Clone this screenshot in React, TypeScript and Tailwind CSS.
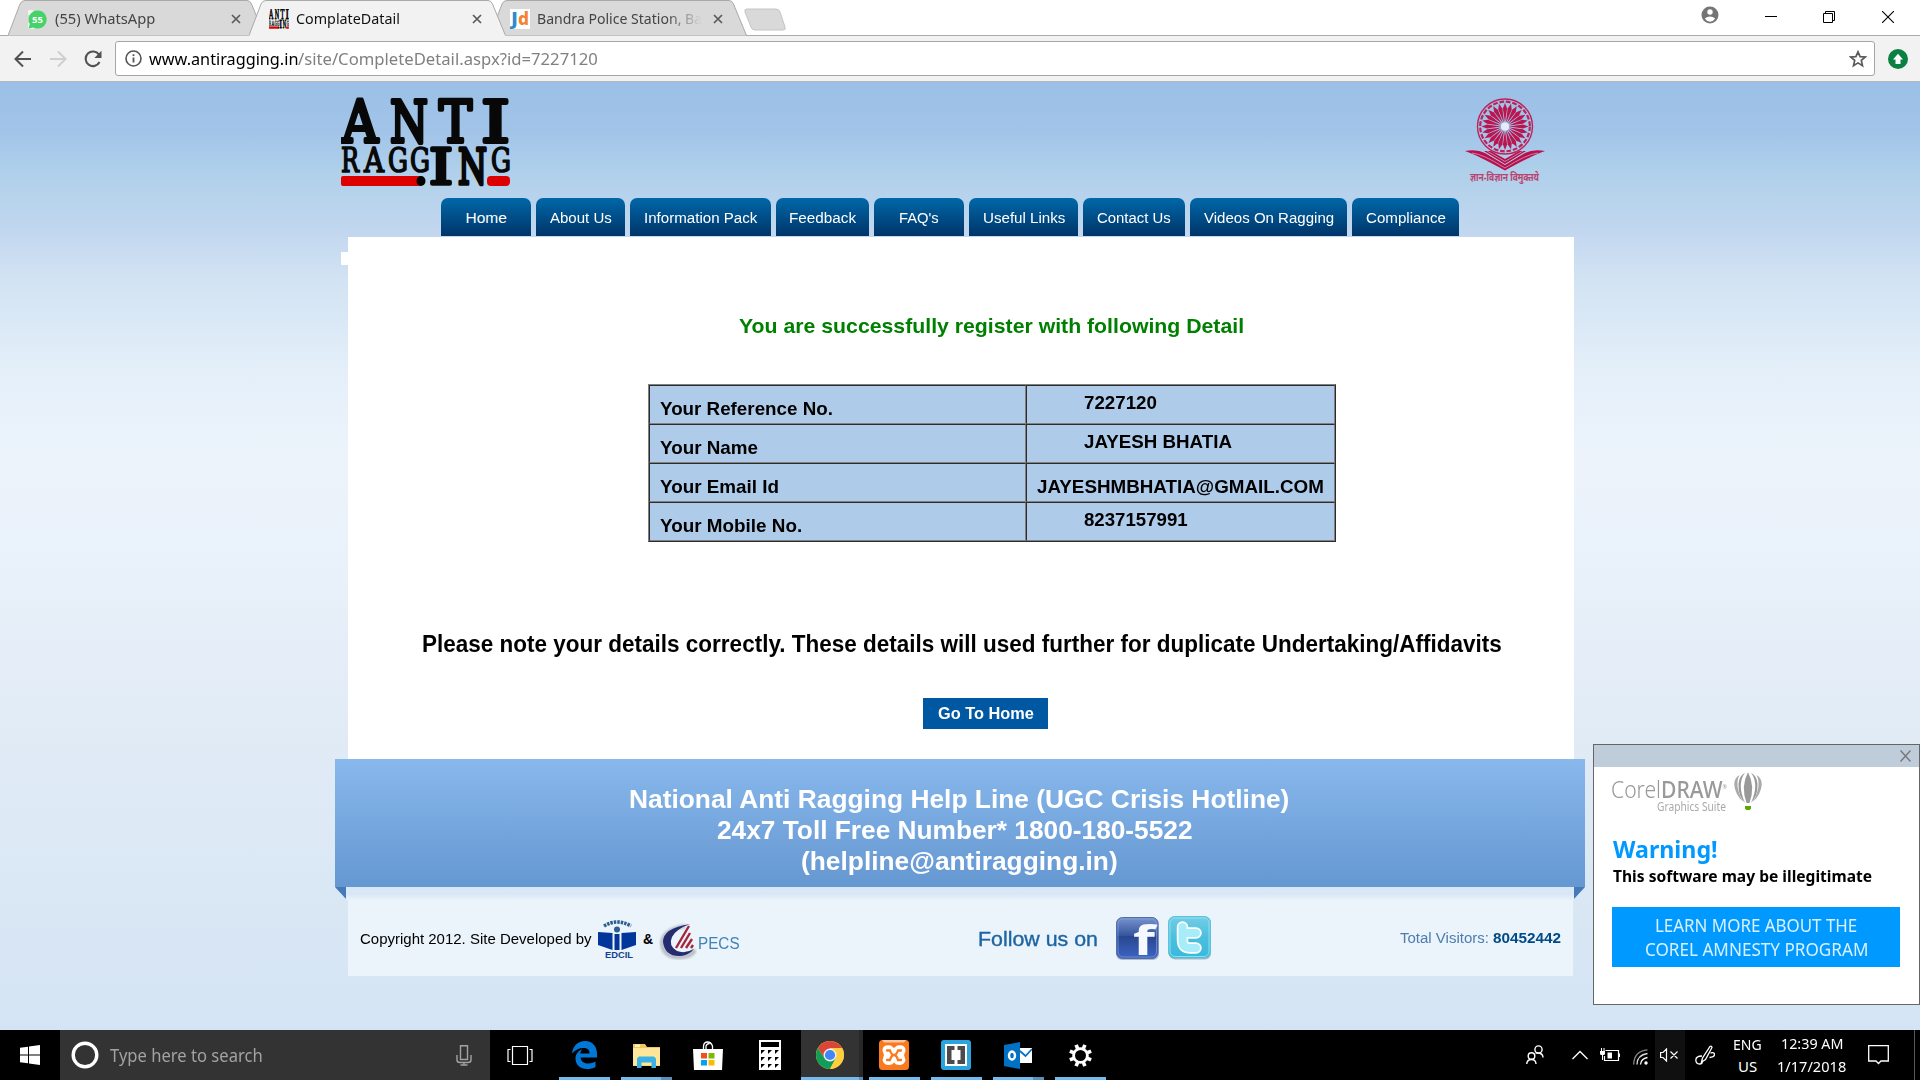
import { useLayoutEffect, useRef, useState, type ReactNode } from "react";

/** One line of text condensed or widened to a given advance width. */
function Fit({ w, className = "", children }: { w: number; className?: string; children: ReactNode }) {
  const ref = useRef<HTMLSpanElement>(null);
  const [scale, setScale] = useState(1);
  useLayoutEffect(() => {
    if (ref.current) setScale(w / ref.current.offsetWidth);
  }, [w]);
  return (
    <span className={"block shrink-0 whitespace-nowrap " + className} style={{ width: w }}>
      <span ref={ref} className="inline-block origin-left align-top" style={{ transform: `scaleX(${scale})` }}>
        {children}
      </span>
    </span>
  );
}

function Tab({ icon, title, w, active, fade }: { icon: ReactNode; title: string; w: number; active?: boolean; fade?: boolean }) {
  return (
    <div className={"relative -ml-4 flex h-9 w-[257px] shrink-0 items-center " + (active ? "z-10" : "z-0")}>
      <svg className="absolute inset-0" width="257" height="36" viewBox="0 0 257 36">
        <path
          d="M0 35.5 L12 4 Q13.500 .5 17 .5 H239 Q242 .5 243.500 4 L256.500 35.500"
          fill={active ? "#f2f2f2" : "#d9d9d9"}
          stroke="#a9a9a9"
        />
        {active && <path d="M.5 36 L1 35 H256 L256.500 36Z" fill="#f2f2f2" />}
      </svg>
      <div className="relative ml-5 mt-[2px] flex w-[27px] shrink-0">{icon}</div>
      <div className={"relative w-[166px] overflow-hidden leading-5 " + (fade ? "[mask-image:linear-gradient(to_right,#000_78%,transparent_99%)]" : "")}>
        <Fit w={w} className={"text-[15px] leading-5 " + (active ? "text-[#111]" : "text-[#444]")}>{title}</Fit>
      </div>
      <svg className="relative ml-[10px] mt-[2px]" width="10" height="10" viewBox="0 0 10 10">
        <path d="M1 1 L9 9 M9 1 L1 9" stroke="#5a5a5a" strokeWidth="1.700" />
      </svg>
    </div>
  );
}

/** Slab-lettered wordmark; x and width place each letter. */
function AntiRaggingLogo({ size = "full" }: { size?: "full" | "small" }) {
  const big: [string, number, number][] = [["A", 1, 36], ["N", 49, 38], ["T", 98, 33], ["I", 140, 29]];
  const low: [string, number, number][] = [["R", 0, 18], ["A", 23, 20], ["G", 47, 20], ["G", 69, 20], ["G", 150, 20]];
  const tall: [string, number, number][] = [["I", 88, 24], ["N", 117, 29]];
  const letter = ([c, x, w]: [string, number, number], y: number, fs: number, sw: number) => (
    <text key={c + x} x={x} y={y} fontSize={fs} strokeWidth={sw} textLength={w} lengthAdjust="spacingAndGlyphs">{c}</text>
  );
  return (
    <svg width={size === "full" ? 170 : 20} height={size === "full" ? 90 : 20} viewBox="0 0 170 90" preserveAspectRatio="none">
      <rect x="0" y="79" width="80" height="10" rx="2" fill="#dc0000" />
      <rect x="146" y="79" width="23" height="10" rx="4" fill="#dc0000" />
      <ellipse cx="80" cy="84" rx="4.500" ry="5" />
      <g fontFamily="DejaVu Serif, serif" fill="#080808" stroke="#080808" strokeLinejoin="round">
        {big.map((l) => letter(l, 45, 58, 4))}
        {low.map((l) => letter(l, 74.5, 33, 1.7))}
        {tall.map((l) => letter(l, 87, 48, 3.6))}
      </g>
    </svg>
  );
}

function Emblem() {
  const spokes = Array.from({ length: 24 }, (_, i) => i * 15);
  return (
    <svg width="84" height="92" viewBox="0 0 84 92">
      <g transform="translate(42 29.500)" fill="none" stroke="#bf2058">
        <circle r="27.500" strokeWidth="1.400" />
        <circle r="24.800" strokeWidth="2.200" strokeDasharray="4.700 1.800" />
        {spokes.map((a) => (
          <path key={a} transform={`rotate(${a})`} d="M0 -4 L-2.100 -18 L0 -23.500 L2.100 -18Z" fill="#b9164f" stroke="none" />
        ))}
        <circle r="4" fill="#e4ecf8" stroke="none" />
      </g>
      <g fill="#b90f4b">
        <path d="M2 54 Q14 52 22 56 L42 68 L62 56 Q70 52 82 54 Q70 58 42 73.500 Q14 58 2 54Z" />
        <path d="M21 54 H28 L42 62 L56 54 H63 L42 67Z" />
      </g>
      <path d="M9 56 Q20 57 42 71 Q64 57 75 56 M24 54 L42 64.500 L60 54" fill="none" stroke="#c6d3ea" strokeWidth=".6" />
      <text x="7" y="84" fontFamily="Noto Sans, sans-serif" fontWeight="700" fontSize="11" fill="#b9446f" textLength="69" lengthAdjust="spacingAndGlyphs">
        ज्ञान-विज्ञान विमुक्तये
      </text>
    </svg>
  );
}

const NAV: [string, string, number][] = [
  ["Home", "w-[90px]", 41],
  ["About Us", "w-[89px]", 62],
  ["Information Pack", "w-[141px]", 113],
  ["Feedback", "w-[93px]", 67],
  ["FAQ's", "w-[90px]", 40],
  ["Useful Links", "w-[109px]", 82],
  ["Contact Us", "w-[102px]", 74],
  ["Videos On Ragging", "w-[157px]", 130],
  ["Compliance", "w-[107px]", 80],
];

const ROWS: { label: string; lw: number; value: string; vw: number; wide?: boolean }[] = [
  { label: "Your Reference No.", lw: 173, value: "7227120", vw: 73 },
  { label: "Your Name", lw: 98, value: "JAYESH BHATIA", vw: 148 },
  { label: "Your Email Id", lw: 119, value: "JAYESHMBHATIA@GMAIL.COM", vw: 287, wide: true },
  { label: "Your Mobile No.", lw: 142, value: "8237157991", vw: 104 },
];

function Browser() {
  return (
    <header className="h-[82px] shrink-0 bg-white font-['Noto_Sans',sans-serif]">
      <div className="relative flex h-9 border-b border-[#acacac] pl-6">
        <div className="flex h-9">
          <Tab
            title="(55) WhatsApp"
            w={100}
            icon={
              <svg width="19" height="19" viewBox="0 0 19 19">
                <path d="M0 0H5V5H0Z M0 13H6V19H0Z" fill="#eef6ef" />
                <path d="M9.500 .5a9 9 0 1 1-4 17L.5 18.500 1.800 14A9 9 0 0 1 9.500 .5Z" fill="#43d366" />
                <text x="9.500" y="13" textAnchor="middle" fontSize="9.500" fontWeight="700" fill="#fff">55</text>
              </svg>
            }
          />
          <Tab title="ComplateDatail" w={104} active icon={<AntiRaggingLogo size="small" />} />
          <Tab
            title="Bandra Police Station, Ba"
            w={165}
            fade
            icon={
              <svg width="20" height="20" viewBox="0 0 20 20">
                <rect width="20" height="20" fill="#fff" />
                <text x="1" y="16" fontSize="18" fontWeight="800" fill="#2f8ccb" textLength="7" lengthAdjust="spacingAndGlyphs">J</text>
                <text x="8" y="16" fontSize="18" fontWeight="800" fill="#f58233" textLength="11" lengthAdjust="spacingAndGlyphs">d</text>
              </svg>
            }
          />
        </div>
        <svg className="-ml-[4px] mt-[8px]" width="44" height="23" viewBox="0 0 44 23">
          <path d="M4 1 H33 Q36 1 37 4 L42 19 Q43 22 40 22 H12 Q9 22 8 19 L2 4 Q1 1 4 1Z" fill="#d9d9d9" stroke="#c4c4c4" />
        </svg>
        <div className="ml-auto flex">
          <svg className="mt-[6px] mr-[46px]" width="18" height="18" viewBox="0 0 18 18">
            <circle cx="9" cy="9" r="8.500" fill="#757575" />
            <circle cx="9" cy="6" r="2.700" fill="#fff" />
            <path d="M3.800 12.500 Q9 8.500 14.200 12.500 Q12 15.800 9 15.800 T3.800 12.500Z" fill="#fff" />
          </svg>
          <svg className="mt-[10px] mr-[46px]" width="12" height="13" viewBox="0 0 12 13"><path d="M0 6.500H12" stroke="#000" /></svg>
          <svg className="mt-[11px] mr-[46px]" width="13" height="13" viewBox="0 0 13 13">
            <path d="M.5 2.500H9.500V11.500H.5Z M2.500 2.500V.5H11.500V9.500H9.500" fill="none" stroke="#000" />
          </svg>
          <svg className="mt-[11px] mr-[26px]" width="12" height="12" viewBox="0 0 12 12"><path d="M0 0L12 12M12 0L0 12" stroke="#000" strokeWidth="1.100" /></svg>
        </div>
      </div>
      <div className="flex h-[46px] items-center border-b border-[#b4b8bb] bg-[#f2f2f2] pl-[13px]">
        <svg width="19" height="18" viewBox="0 0 19 18"><path d="M18 9H3M10 1.500L2.500 9L10 16.500" fill="none" stroke="#525252" strokeWidth="2" /></svg>
        <svg className="ml-[17px]" width="19" height="18" viewBox="0 0 19 18"><path d="M1 9H16M9 1.500L16.500 9L9 16.500" fill="none" stroke="#cfcfcf" strokeWidth="2" /></svg>
        <svg className="ml-[16px]" width="19" height="18" viewBox="0 0 19 18">
          <path d="M15.500 12 A7.300 7.300 0 1 1 15 4.700" fill="none" stroke="#525252" strokeWidth="2.100" />
          <path d="M17.500 .8V8H10.300Z" fill="#525252" />
        </svg>
        <div className="ml-3 flex h-[35px] w-[1760px] items-center rounded-[3px] border border-[#a6a6a6] bg-white pl-[9px]">
          <svg width="17" height="17" viewBox="0 0 17 17">
            <circle cx="8.500" cy="8.500" r="7.500" fill="none" stroke="#555" strokeWidth="1.600" />
            <path d="M8.500 7.500V12.500M8.500 4.300V6" stroke="#555" strokeWidth="1.800" />
          </svg>
          <Fit w={149} className="ml-[7px] text-[17px] leading-6 text-black">www.antiragging.in</Fit>
          <Fit w={300} className="text-[17px] leading-6 text-[#808080]">/site/CompleteDetail.aspx?id=7227120</Fit>
          <svg className="ml-auto mr-[7px]" width="18" height="18" viewBox="0 0 18 18">
            <path d="M9 1.800L11.100 6.600L16.300 7L12.300 10.400L13.500 15.700L9 12.900L4.500 15.700L5.700 10.400L1.700 7L6.900 6.600Z" fill="none" stroke="#5a5a5a" strokeWidth="1.700" />
          </svg>
        </div>
        <svg className="ml-[13px]" width="20" height="20" viewBox="0 0 20 20">
          <circle cx="10" cy="10" r="10" fill="#0b8043" />
          <path d="M10 4.800L15 10.500H12.500V15H7.500V10.500H5Z" fill="#fff" />
        </svg>
      </div>
    </header>
  );
}

function Cell({ children, className }: { children: ReactNode; className: string }) {
  return (
    <div className={"h-[39px] border-b border-l border-r border-t border-b-[#808080] border-l-[#2c2c2c] border-r-[#808080] border-t-[#2c2c2c] " + className}>
      {children}
    </div>
  );
}

function Site() {
  return (
    <main className="h-[948px] shrink-0 bg-[linear-gradient(to_bottom,#9bbfe6_0px,#a2c4e9_50px,#aecfea_85px,#c2d7ef_150px,#d2e3f3_198px,#e6f0fa_300px,#ecf3fb_380px,#e9f1fa_480px,#e1ebf6_650px,#dae8f5_800px,#d5e4f4_948px)] pl-[335px] font-['Liberation_Sans',Arial,sans-serif]">
      <div className="flex w-[1250px] flex-col">
        <div className="flex h-[116px] justify-between pl-[6px] pr-[38px] pt-[15px]">
          <AntiRaggingLogo />
          <Emblem />
        </div>
        <nav className="ml-[106px] flex gap-[5px]">
          {NAV.map(([label, width, tw]) => (
            <a key={label} className={"flex h-[38px] items-center justify-center rounded-t-[7px] bg-linear-to-b from-[#0068a8] to-[#00356a] text-[15.500px] text-white " + width}>
              <Fit w={tw} className="mt-[1px] leading-5">{label}</Fit>
            </a>
          ))}
        </nav>
        <section className="relative ml-[13px] mt-px flex h-[522px] w-[1226px] flex-col bg-white">
          <div className="absolute -left-[7px] top-[15px] h-[13px] w-[7px] bg-white" />
          <Fit w={505} className="ml-[391px] mt-[75px] text-[21px] font-bold leading-7 text-[#008000]">
            You are successfully register with following Detail
          </Fit>
          <div className="ml-[300px] mt-[44px] w-[688px] border border-b-[#2c2c2c] border-l-[#808080] border-r-[#2c2c2c] border-t-[#808080] bg-[#aecbe9] text-[19px] font-bold leading-6 text-black">
            {ROWS.map((r) => (
              <div key={r.label} className="flex">
                <Cell className="w-[377px] pl-[10px] pt-[11px]"><Fit w={r.lw}>{r.label}</Fit></Cell>
                <Cell className={"w-[309px] " + (r.wide ? "pl-[10px] pt-[11px]" : "pl-[57px] pt-[5px]")}><Fit w={r.vw}>{r.value}</Fit></Cell>
              </div>
            ))}
          </div>
          <Fit w={1080} className="ml-[74px] mt-[87px] text-[23.500px] font-bold leading-[30px] text-black">
            Please note your details correctly. These details will used further for duplicate Undertaking/Affidavits
          </Fit>
          <button className="ml-[575px] mt-[39px] flex h-[31px] w-[125px] items-center bg-[#0058a3] pl-[14px] text-[16px] font-bold text-white">
            <Fit w={96} className="leading-5">Go To Home</Fit>
          </button>
        </section>
        <section className="flex h-32 flex-col items-center bg-linear-to-b from-[#88b8ec] to-[#6597d1] pt-[25px] text-[26.670px] font-bold leading-[31px] text-white">
          <Fit w={660} className="ml-[-2px]">National Anti Ragging Help Line (UGC Crisis Hotline)</Fit>
          <Fit w={476} className="ml-[-10px]">24x7 Toll Free Number* 1800-180-5522</Fit>
          <Fit w={317} className="ml-[-2px]">{"(helpline@antiragging.in)"}</Fit>
        </section>
        <div className="flex h-[13px]">
          <svg width="11" height="13" viewBox="0 0 11 13"><path d="M0 0H11V12Z" fill="#447ab9" /></svg>
          <div className="w-[1228px] bg-linear-to-b from-[#dae8f6] via-[#d8e7f6] to-[#e9f2fa]" />
          <svg width="11" height="13" viewBox="0 0 11 13"><path d="M0 0H11L0 12Z" fill="#447ab9" /></svg>
        </div>
        <footer className="ml-[13px] flex h-[76px] w-[1225px] items-start bg-[#ebf3fb] pl-[12px] text-[15.500px] leading-5 text-black">
          <Fit w={232} className="mt-[29px]">Copyright 2012. Site Developed by</Fit>
          <svg className="ml-[6px] mt-[19px]" width="38" height="40" viewBox="0 0 38 40">
            <path d="M6 7Q19 -1 33 7" fill="none" stroke="#2c5e91" strokeWidth="3.600" strokeDasharray="2.500 1" />
            <path d="M0 13L14.500 14V31L0 26Z M38 13L23.500 14V31L38 26Z" fill="#03369a" />
            <rect x="16.500" y="15" width="5" height="16" fill="#03369a" />
            <circle cx="19" cy="10.500" r="3" fill="#2c5e91" />
            <text x="7" y="39" fontSize="9.500" fontWeight="700" fill="#123f92" textLength="28" lengthAdjust="spacingAndGlyphs">EDCIL</text>
          </svg>
          <b className="ml-[7px] mt-[29px] w-[11px] text-[14px]">&amp;</b>
          <svg className="ml-[5px] mt-[22px]" width="38" height="38" viewBox="0 0 38 38">
            <defs>
              <filter id="soft"><feGaussianBlur stdDeviation="1.200" /></filter>
            </defs>
            <path d="M26 4Q3 8 3 22Q5 37 24 35Q33 34 36 28" fill="none" stroke="#b8bdc6" strokeWidth="4" filter="url(#soft)" />
            <path d="M31 2Q4 6 4 20Q6 35 22 34Q30 33 35 27Q26 32 18 29Q9 24 13 15Q17 7 31 2Z" fill="#252c70" />
            <path d="M30 4L17 26M31 11L22 26M33 17L27 26M34 23L32 26" stroke="#a3263b" strokeWidth="2.400" />
          </svg>
          <Fit w={42} className="ml-[1px] mt-[34px] text-[16px] text-[#4183b7]">PECS</Fit>
          <Fit w={120} className="ml-[238px] mt-[27px] text-[21px] leading-6 text-[#1d65a3] [-webkit-text-stroke:0.400px_#1d65a3]">Follow us on</Fit>
          <svg className="ml-[17px] mt-[16px]" width="45" height="45" viewBox="0 0 45 45">
            <defs>
              <linearGradient id="fb" x1="0" y1="0" x2="0" y2="1"><stop offset="0" stopColor="#7794cf" /><stop offset=".45" stopColor="#35539c" /><stop offset=".46" stopColor="#29468f" /><stop offset="1" stopColor="#3d63c4" /></linearGradient>
            </defs>
            <rect x="1" y="2" width="43" height="42" rx="6" fill="#8b96ad" opacity=".6" />
            <rect x="1.500" y="1.500" width="41.500" height="41" rx="6" fill="url(#fb)" stroke="#4f6cae" />
            <rect x="3" y="3" width="38.500" height="38" rx="5" fill="none" stroke="#8ea6da" strokeOpacity=".6" />
            <text x="18" y="39" fontFamily="Open Sans" fontSize="42" fontWeight="700" fill="#f5f8fe" textLength="22" lengthAdjust="spacingAndGlyphs">f</text>
          </svg>
          <svg className="ml-[7px] mt-[15px]" width="45" height="45" viewBox="0 0 45 45">
            <defs>
              <linearGradient id="tw" x1="0" y1="0" x2="0" y2="1"><stop offset="0" stopColor="#73cde5" /><stop offset=".5" stopColor="#4bbfdf" /><stop offset="1" stopColor="#38b9dc" /></linearGradient>
            </defs>
            <rect x="2" y="2" width="42" height="42.500" rx="6" fill="#8b9aa3" opacity=".6" />
            <rect x="1.500" y="1.500" width="42" height="41.500" rx="6" fill="url(#tw)" stroke="#64bfd8" />
            <rect x="3" y="3" width="39" height="38.500" rx="5" fill="none" stroke="#8be0f0" />
            <path d="M15.500 12V25Q15.500 33 23 33H29M15.500 18H29" fill="none" stroke="#fff" strokeWidth="11.500" strokeLinecap="round" strokeLinejoin="round" />
            <path d="M15.500 12V25Q15.500 33 23 33H29M15.500 18H29" fill="none" stroke="#a6edf9" strokeWidth="8" strokeLinecap="round" strokeLinejoin="round" />
          </svg>
          <div className="ml-auto mr-[12px] mt-[28px] flex gap-[4px]">
            <Fit w={89} className="text-[#4c7dae]">Total Visitors:</Fit>
            <Fit w={68} className="font-bold text-[#004a87]">80452442</Fit>
          </div>
        </footer>
      </div>
    </main>
  );
}

function CorelPopup() {
  return (
    <aside className="absolute left-[1593px] top-[744px] flex h-[261px] w-[327px] flex-col border border-[#666] bg-white font-['Noto_Sans',sans-serif]">
      <div className="flex h-[22px] shrink-0 items-center justify-end bg-[#bfccda] pb-px pr-2">
        <svg width="11" height="12" viewBox="0 0 11 12"><path d="M.5 .5L10.500 11.500M10.500 .5L.5 11.500" stroke="#777" strokeWidth="1.400" /></svg>
      </div>
      <div className="flex h-[52px] pl-[17px]">
        <div className="w-[120px] pt-[7px]">
          <Fit w={116} className="text-[24px] leading-[26px] text-[#999]">
            <span className="font-light">Corel</span><span className="font-medium">DRAW</span><span className="align-super text-[6px]">®</span>
          </Fit>
          <Fit w={69} className="-mt-[2px] ml-[46px] text-[12px] leading-[14px] text-[#aaa]">Graphics Suite</Fit>
        </div>
        <svg className="ml-[3px] mt-[5px]" width="28" height="39" viewBox="0 0 28 39">
          <path d="M14 .3Q21.500 14 15.500 31H12.500Q6.500 14 14 .3Z" fill="#999" />
          <path d="M11 .8Q2.500 12 11 31Q4 24 4.500 12Q5 4 11 .8Z M17 .8Q25.500 12 17 31Q24 24 23.500 12Q23 4 17 .8Z" fill="#999" />
          <path d="M5.500 3Q0 13 9 30Q1 22 .3 13Q0 6 5.500 3Z M22.500 3Q28 13 19 30Q27 22 27.700 13Q28 6 22.500 3Z" fill="#aaa" />
          <path d="M11 34H17V36Q17 38 14 38T11 36Z" fill="#59a900" />
        </svg>
      </div>
      <Fit w={105} className="ml-[19px] mt-[16px] text-[23px] font-bold leading-[28px] text-[#0099ff]">Warning!</Fit>
      <Fit w={259} className="ml-[19px] mt-[4px] text-[16px] font-bold leading-[18px] text-black">This software may be illegitimate</Fit>
      <div className="ml-[18px] mt-[22px] flex h-[60px] w-[288px] flex-col items-center bg-[#0099ff] pt-[6px] text-[17.500px] leading-6 text-[#d9f0ff]">
        <Fit w={202}>LEARN MORE ABOUT THE</Fit>
        <Fit w={223}>COREL AMNESTY PROGRAM</Fit>
      </div>
    </aside>
  );
}

function TaskApp({ children, line, chrome }: { children?: ReactNode; line?: "one" | "many"; chrome?: boolean }) {
  return (
    <div className="flex h-[50px] w-[62px] shrink-0 flex-col items-center">
      <div className={"flex h-[47px] items-center justify-center pt-[3px] " + (chrome ? "w-[62px] border-r-4 border-r-[#282828] bg-[#333]" : "w-[51px]")}>{children}</div>
      {line && (
        <div className={"flex h-[3px] " + (chrome ? "w-[62px]" : "w-[51px]")}>
          <div className="flex-1 bg-[#76b9ed]" />
          {line === "many" && <div className={"bg-[#5a8fba] " + (chrome ? "w-1" : "w-[11px]")} />}
        </div>
      )}
    </div>
  );
}

function Taskbar() {
  return (
    <div className="flex h-[50px] shrink-0 bg-black font-['Noto_Sans',sans-serif] text-white">
      <div className="flex w-[60px] items-center justify-center">
        <svg width="20" height="20" viewBox="0 0 20 20">
          <path d="M0 2.800L8 1.700V9.400H0Z M9 1.500L20 0V9.400H9Z M0 10.400H8V18.300L0 17.200Z M9 10.400H20V20L9 18.500Z" fill="#fff" />
        </svg>
      </div>
      <div className="flex w-[430px] items-center bg-[#333] pl-[11px]">
        <svg width="28" height="28" viewBox="0 0 28 28"><circle cx="14" cy="14" r="11.800" fill="none" stroke="#fff" strokeWidth="3.400" /></svg>
        <Fit w={153} className="ml-[11px] text-[18px] leading-6 text-[#a2a2a2]">Type here to search</Fit>
        <svg className="ml-auto mr-[18px]" width="16" height="21" viewBox="0 0 16 21">
          <path d="M4.500 .8H11.500V14.500H4.500Z M1 10V15Q1 17.500 4 17.500H12Q15 17.500 15 15V10M8 17.500V20M4.500 20H11.500" fill="none" stroke="#a3a3a3" strokeWidth="1.400" />
        </svg>
      </div>
      <div className="flex w-[63px] items-center justify-center pr-1">
        <svg width="26" height="19" viewBox="0 0 26 19">
          <path d="M5.500 .5H20.500V18.500H5.500Z M3.500 3.500H1V15.500H3.500M22.500 3.500H25V15.500H22.500" fill="none" stroke="#fff" strokeWidth="1.200" />
        </svg>
      </div>
      <TaskApp line="one">
        <svg width="25" height="28" viewBox="0 0 25 28">
          <path d="M0 12.500C1 4 7 0 13 0C21 0 25 6 25 13V16.500H8.500C9 21 13 22.500 16 22.500C19 22.500 21.500 21.500 23.500 20.500V26C21 27.500 18 28 15 28C8 28 3.500 23.500 3.500 17.500C3.500 13 6.500 9.500 10.500 8C9 9.500 8.500 11 8.300 12.500H17.500C17.500 8.500 15.500 7 11.500 7C7 7 3 9 0 12.500Z" fill="#0078d7" />
        </svg>
      </TaskApp>
      <TaskApp line="many">
        <svg width="29" height="25" viewBox="0 0 29 25">
          <path d="M1 1H13L15 4H28V23H1Z" fill="#f0c75e" />
          <path d="M1 5H28V22.500H1Z" fill="#ffe699" />
          <path d="M3 1.500H8V4H3Z" fill="#fff2c2" />
          <path d="M5 25V15.500L7 13.500H22L24 15.500V25H19.500V19.500H9.500V25Z" fill="#3bb2e6" />
        </svg>
      </TaskApp>
      <TaskApp>
        <svg width="30" height="29" viewBox="0 0 30 29">
          <path d="M10.500 8V5Q11 1 14.500 1T19.500 5V8M13 8V5Q14 2.500 16.500 2.500" fill="none" stroke="#fff" strokeWidth="1.300" />
          <path d="M0 8H30L29 29H1Z" fill="#fff" />
          <path d="M8 12H14V17.500H8Z" fill="#f25022" /><path d="M15.500 12H21.500V17.500H15.500Z" fill="#7fba00" />
          <path d="M8 19H14V24.500H8Z" fill="#00a4ef" /><path d="M15.500 19H21.500V24.500H15.500Z" fill="#ffb900" />
        </svg>
      </TaskApp>
      <TaskApp>
        <svg width="22" height="30" viewBox="0 0 22 30">
          <rect width="22" height="30" fill="#fff" />
          <path d="M2 2H20V7H2Z M2 10H6L2 14Z M9 10H13L9 14Z M16 10H20L16 14Z M2 17H6L2 21Z M9 17H13L9 21Z M16 17H20L16 21Z M2 24H6L2 28Z M9 24H13L9 28Z M16 24H20L16 28Z" />
        </svg>
      </TaskApp>
      <TaskApp line="many" chrome>
        <svg width="28" height="28" viewBox="-14 -14 28 28">
          <circle r="14" fill="#ffcd40" />
          <path d="M-12.120 -7A14 14 0 0 1 12.120 -7L0 -6.500L-5.600 3.200Z" fill="#db4437" />
          <path d="M-12.120 -7A14 14 0 0 0 0 14L5.600 3.200L-5.600 3.200Z" fill="#0f9d58" />
          <path d="M12.120 -7H0V-6.500L6 3L0 14A14 14 0 0 0 12.120 -7Z" fill="#ffcd40" />
          <circle r="6.500" fill="#f1f1f1" /><circle r="5.100" fill="#4285f4" />
        </svg>
      </TaskApp>
      <TaskApp line="one">
        <svg width="30" height="30" viewBox="0 0 30 30">
          <rect width="30" height="30" rx="3.500" fill="#f9791f" /><path d="M3 0H27L25 2.500H5Z" fill="#fdc6a0" />
          <path d="M15 8L18 5.500Q27 4 26.500 11L25 15L26.500 20Q25 26.500 17 24.500L15 22.500L13 24.500Q5 26.500 3.500 20L5 15L3.500 11Q3 4 12 5.500Z" fill="#fff" />
          <path d="M8 10.500H11Q12.500 15 15 15T19 10.500H22M8 20H11Q12.500 15 15 15T19 20H22" fill="none" stroke="#f9791f" strokeWidth="2.300" strokeLinecap="round" />
        </svg>
      </TaskApp>
      <TaskApp line="one">
        <svg width="30" height="30" viewBox="0 0 30 30">
          <rect width="30" height="30" rx="3" fill="#2ba4dd" /><rect x="4" y="4" width="22" height="22" fill="#fff" />
          <path d="M6 6H13.500V10H10.500V20H13.500V24H6Z M24 6H16.500V10H19.500V20H16.500V24H24Z" fill="#4b4b4b" />
        </svg>
      </TaskApp>
      <TaskApp line="many">
        <svg width="28" height="27" viewBox="0 0 28 27">
          <path d="M14 6H28V21H14Z" fill="#fff" /><path d="M16 9L21.500 14L28 7" fill="none" stroke="#0072c6" strokeWidth="1.800" />
          <path d="M0 3L16 0V27L0 24Z" fill="#0072c6" />
          <ellipse cx="8" cy="13.500" rx="3" ry="4" fill="none" stroke="#fff" strokeWidth="2.400" />
        </svg>
      </TaskApp>
      <TaskApp line="one">
        <svg width="23" height="23" viewBox="-11.500 -11.500 23 23">
          {[0, 45, 90, 135, 180, 225, 270, 315].map((a) => <rect key={a} x="-1.800" y="-11.500" width="3.600" height="5" fill="#fff" transform={`rotate(${a + 22.5})`} />)}
          <circle r="6.900" fill="none" stroke="#fff" strokeWidth="2.800" />
        </svg>
      </TaskApp>
      <div className="ml-auto flex items-center">
        <svg className="mr-[28px]" width="18" height="20" viewBox="0 0 18 20" fill="none" stroke="#fff" strokeWidth="1.400">
          <circle cx="12.500" cy="4.500" r="3.600" /><circle cx="5.500" cy="11" r="3.300" /><path d="M9.500 8Q11 8 12.500 8Q17 8.500 17 12.500M.7 19Q1 14.500 5.500 14.500T10 19" />
        </svg>
        <svg className="mr-[12px]" width="16" height="10" viewBox="0 0 16 10"><path d="M.5 9L8 1.500L15.500 9" fill="none" stroke="#fff" strokeWidth="1.300" /></svg>
        <svg className="mr-[13px]" width="20" height="14" viewBox="0 0 20 14">
          <path d="M5.500 2.500H18.500V12.500H4.500V8M19.500 5.500V9" fill="none" stroke="#fff" strokeWidth="1.200" />
          <path d="M7.500 4.500H12V10.500H7.500Z M0 3H5V5.500Q5 7 3.500 7H1.500Q0 7 0 5.500Z M1 0H2V3H1Z M3.500 0H4.500V3H3.500Z M2 7H3V12H2Z" fill="#fff" />
        </svg>
        <svg className="mr-[7px] mt-1" width="15" height="16" viewBox="0 0 15 16" fill="none" strokeWidth="1.300">
          <path d="M.7 15.500Q1 2 14.500 .8" stroke="#888" /><path d="M4 15.500Q4 6 14.500 4.500" stroke="#ddd" /><path d="M7.500 15.500Q8 9.500 14.500 8.500" stroke="#fff" /><circle cx="13" cy="14" r="1.700" fill="#fff" />
        </svg>
        <div className="flex h-[50px] w-[30px] items-center justify-center bg-[#101010] pr-[2px]">
          <svg width="19" height="14" viewBox="0 0 19 14" fill="none" stroke="#fff" strokeWidth="1.200">
            <path d="M.6 4.500H3L6.500 1V13L3 9.500H.6Z M10.500 3.500L17.500 10.500M17.500 3.500L10.500 10.500" />
          </svg>
        </div>
        <svg className="ml-[10px]" width="20" height="20" viewBox="0 0 20 20" fill="none" stroke="#fff" strokeWidth="1.300">
          <path d="M6.500 17L7.500 13L15 1.500Q16.500 .5 17 2.500L10.500 14.500Z M15.500 8Q19.500 7 19.500 9.500T14.500 12.500M7 11Q1 11 .8 15Q1 19 4.500 19T7 16" />
        </svg>
        <div className="ml-[18px] flex w-[29px] flex-col items-center text-[15px] leading-[22px]">
          <Fit w={29}>ENG</Fit><Fit w={19}>US</Fit>
        </div>
        <div className="ml-[15px] flex w-[69px] flex-col items-center text-[15px] leading-[23px]">
          <Fit w={62}>12:39 AM</Fit><Fit w={69}>1/17/2018</Fit>
        </div>
        <svg className="ml-[22px]" width="21" height="20" viewBox="0 0 21 20"><path d="M.7 .7H20.300V16H13L10.500 18.500L8 16H.7Z" fill="none" stroke="#fff" strokeWidth="1.300" /></svg>
        <div className="ml-[25px] mr-[5px] h-[50px] w-px bg-[#555]" />
      </div>
    </div>
  );
}

export default function App() {
  return (
    <div className="relative flex h-[1080px] w-[1920px] flex-col overflow-hidden">
      <Browser />
      <Site />
      <Taskbar />
      <CorelPopup />
    </div>
  );
}
